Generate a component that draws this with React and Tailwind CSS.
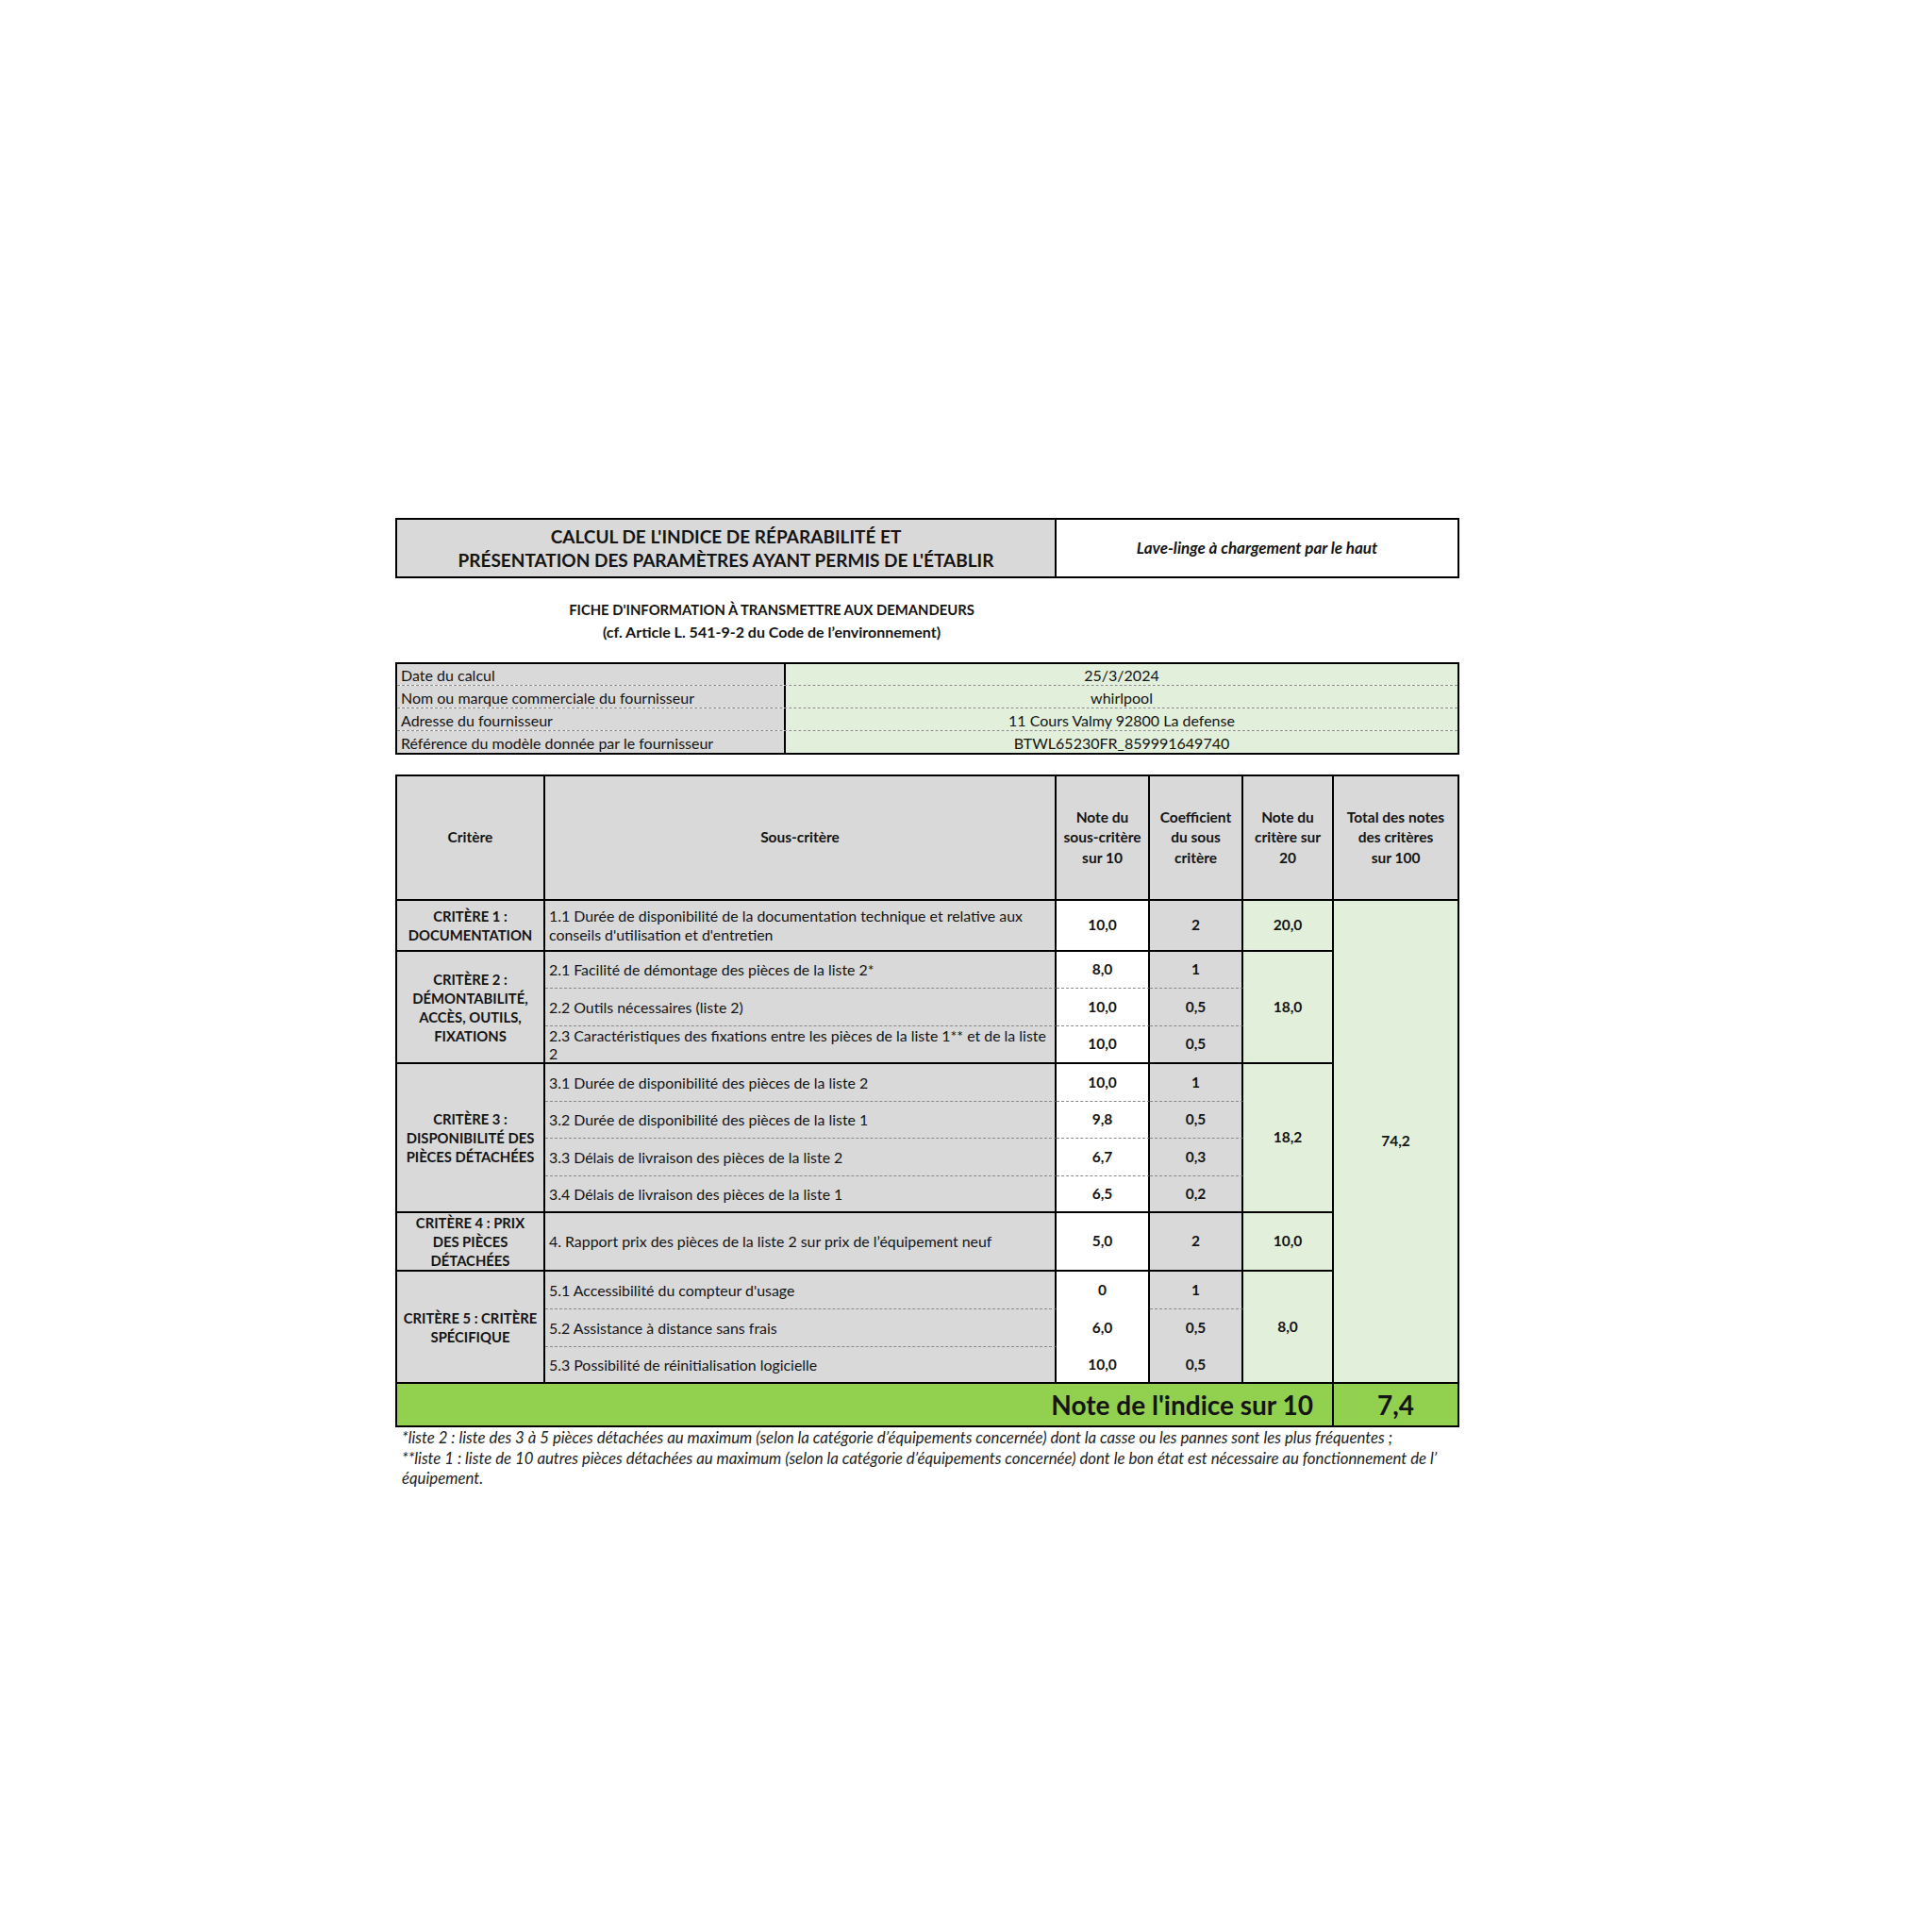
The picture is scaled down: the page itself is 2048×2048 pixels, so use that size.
const GRAY = 'bg-[#d9d9d9]';
const LIGHT = 'bg-[#e2efda]';

const groups = [
  {
    label: ['CRITÈRE 1 :', 'DOCUMENTATION'],
    span: 'row-span-1',
    score: '20,0',
    rows: [
      {
        text: ['1.1 Durée de disponibilité de la documentation technique et relative aux', "conseils d'utilisation et d'entretien"],
        note: '10,0',
        coef: '2',
      },
    ],
  },
  {
    label: ['CRITÈRE 2 :', 'DÉMONTABILITÉ,', 'ACCÈS, OUTILS,', 'FIXATIONS'],
    span: 'row-span-3',
    score: '18,0',
    rows: [
      { text: ['2.1 Facilité de démontage des pièces de la liste 2*'], note: '8,0', coef: '1' },
      { text: ['2.2 Outils nécessaires (liste 2)'], note: '10,0', coef: '0,5' },
      {
        text: ['2.3 Caractéristiques des fixations entre les pièces de la liste 1** et de la liste', '2'],
        note: '10,0',
        coef: '0,5',
        tight: true,
      },
    ],
  },
  {
    label: ['CRITÈRE 3 :', 'DISPONIBILITÉ DES', 'PIÈCES DÉTACHÉES'],
    span: 'row-span-4',
    score: '18,2',
    rows: [
      { text: ['3.1 Durée de disponibilité des pièces de la liste 2'], note: '10,0', coef: '1' },
      { text: ['3.2 Durée de disponibilité des pièces de la liste 1'], note: '9,8', coef: '0,5' },
      { text: ['3.3 Délais de livraison des pièces de la liste 2'], note: '6,7', coef: '0,3' },
      { text: ['3.4 Délais de livraison des pièces de la liste 1'], note: '6,5', coef: '0,2' },
    ],
  },
  {
    label: ['CRITÈRE 4 : PRIX', 'DES PIÈCES', 'DÉTACHÉES'],
    span: 'row-span-1',
    score: '10,0',
    rows: [
      { text: ["4. Rapport prix des pièces de la liste 2 sur prix de l’équipement neuf"], note: '5,0', coef: '2' },
    ],
  },
  {
    label: ['CRITÈRE 5 : CRITÈRE', 'SPÉCIFIQUE'],
    span: 'row-span-3',
    score: '8,0',
    rows: [
      { text: ["5.1 Accessibilité du compteur d'usage"], note: '0', coef: '1', noteSolid: true },
      { text: ['5.2 Assistance à distance sans frais'], note: '6,0', coef: '0,5', noteSolid: true, coefSolid: true },
      { text: ['5.3 Possibilité de réinitialisation logicielle'], note: '10,0', coef: '0,5' },
    ],
  },
];

const infoRows = [
  ['Date du calcul', '25/3/2024'],
  ['Nom ou marque commerciale du fournisseur', 'whirlpool'],
  ['Adresse du fournisseur', '11 Cours Valmy 92800 La defense'],
  ['Référence du modèle donnée par le fournisseur', 'BTWL65230FR_859991649740'],
];
const infoHeights = ['h-[23px]', 'h-[24px]', 'h-[24px]', 'h-[23px]'];

const dashed = 'border-b border-b-[#8a8a8a] [border-bottom-style:dashed]';
const solid = 'border-b-2 border-b-black';

function bottom(isLast, noLine) {
  if (isLast) return solid;
  if (noLine) return '';
  return dashed;
}

function HeadCell({ lines, last }) {
  return (
    <div
      className={`${GRAY} border-b-2 border-b-black ${last ? '' : 'border-r-2 border-r-black'} flex flex-col items-center justify-center text-[15.5px] font-bold leading-[21.5px] text-center`}
    >
      {lines.map(l => (
        <span key={l}>{l}</span>
      ))}
    </div>
  );
}

export default function App() {
  return (
    <div className="w-[2048px] h-[2048px] bg-white text-[#141414] font-['Lato','Liberation_Sans',sans-serif]">
      <div className="w-[1128px] ml-[419px] pt-[549px]">
        {/* Title box */}
        <div className="flex h-[64px] border-2 border-black">
          <div className={`w-[699px] ${GRAY} border-r-2 border-r-black flex flex-col items-center justify-center text-[19px] font-bold leading-[25px]`}>
            <span>CALCUL DE L'INDICE DE RÉPARABILITÉ ET</span>
            <span>PRÉSENTATION DES PARAMÈTRES AYANT PERMIS DE L'ÉTABLIR</span>
          </div>
          <div className="flex-1 bg-white flex items-center justify-center text-[17px] font-bold italic">
            Lave-linge à chargement par le haut
          </div>
        </div>

        {/* Fiche */}
        <div className="w-[798px] h-[89px] pt-[21px] flex flex-col items-center font-bold leading-[24px]">
          <span className="text-[14.8px]">FICHE D'INFORMATION À TRANSMETTRE AUX DEMANDEURS</span>
          <span className="text-[16px]">(cf. Article L. 541-9-2 du Code de l’environnement)</span>
        </div>

        {/* Supplier info */}
        <div className="border-2 border-black text-[16px]">
          {infoRows.map(([k, v], i) => (
            <div key={k} className={`flex ${infoHeights[i]} ${i < 3 ? dashed : ''}`}>
              <div className={`w-[412px] ${GRAY} border-r-2 border-r-black pl-[4px] flex items-end leading-[21px]`}>{k}</div>
              <div className={`flex-1 ${LIGHT} flex items-end justify-center leading-[21px]`}>{v}</div>
            </div>
          ))}
        </div>

        {/* Main table */}
        <div className="mt-[21px] border-2 border-black grid grid-cols-[157px_542px_99px_99px_96px_131px] grid-rows-[132px_54px_39px_40px_40px_40px_39px_40px_39px_62px_40px_40px_39px_44px]">
          <HeadCell lines={['Critère']} />
          <HeadCell lines={['Sous-critère']} />
          <HeadCell lines={['Note du', 'sous-critère', 'sur 10']} />
          <HeadCell lines={['Coefficient', 'du sous', 'critère']} />
          <HeadCell lines={['Note du', 'critère sur', '20']} />
          <HeadCell lines={['Total des notes', 'des critères', 'sur 100']} last />

          {groups.map((g, gi) =>
            g.rows.map((r, ri) => {
              const isLast = ri === g.rows.length - 1;
              return [
                ri === 0 && (
                  <div
                    key={`c${gi}`}
                    className={`${g.span} ${GRAY} border-r-2 border-r-black ${solid} flex flex-col items-center justify-center text-[14.8px] font-bold leading-[20px] text-center`}
                  >
                    {g.label.map(l => (
                      <span key={l} className="whitespace-nowrap">{l}</span>
                    ))}
                  </div>
                ),
                <div
                  key={`s${gi}-${ri}`}
                  className={`${GRAY} border-r-2 border-r-black ${bottom(isLast)} pl-[4px] flex flex-col ${r.tight ? 'justify-end leading-[19px]' : 'justify-center leading-[20px]'} text-[15.9px]`}
                >
                  {r.text.map(t => (
                    <span key={t} className="whitespace-nowrap">{t}</span>
                  ))}
                </div>,
                <div
                  key={`n${gi}-${ri}`}
                  className={`bg-white border-r-2 border-r-black ${bottom(isLast, r.noteSolid)} flex items-center justify-center text-[15.5px] font-bold`}
                >
                  {r.note}
                </div>,
                <div
                  key={`k${gi}-${ri}`}
                  className={`${GRAY} border-r-2 border-r-black ${bottom(isLast, r.coefSolid)} flex items-center justify-center text-[15.5px] font-bold`}
                >
                  {r.coef}
                </div>,
                ri === 0 && (
                  <div
                    key={`p${gi}`}
                    className={`${g.span} ${LIGHT} border-r-2 border-r-black ${solid} flex items-center justify-center text-[15.5px] font-bold`}
                  >
                    {g.score}
                  </div>
                ),
                gi === 0 && ri === 0 && (
                  <div key="total" className={`row-span-12 ${LIGHT} ${solid} flex items-center justify-center text-[15.5px] font-bold`}>
                    74,2
                  </div>
                ),
              ];
            })
          )}

          <div className="col-span-5 bg-[#92d050] border-r-2 border-r-black flex items-center justify-end pr-[20px] text-[28px] font-bold">
            Note de l'indice sur 10
          </div>
          <div className="bg-[#92d050] flex items-center justify-center text-[28px] font-bold">7,4</div>
        </div>

        {/* Footnotes */}
        <div className="pl-[7px] text-[16.8px] italic leading-[21.5px] text-[#222]">
          <p>*liste 2 : liste des 3 à 5 pièces détachées au maximum (selon la catégorie d’équipements concernée) dont la casse ou les pannes sont les plus fréquentes ;</p>
          <p>**liste 1 : liste de 10 autres pièces détachées au maximum (selon la catégorie d’équipements concernée) dont le bon état est nécessaire au fonctionnement de l’</p>
          <p>équipement.</p>
        </div>
      </div>
    </div>
  );
}
